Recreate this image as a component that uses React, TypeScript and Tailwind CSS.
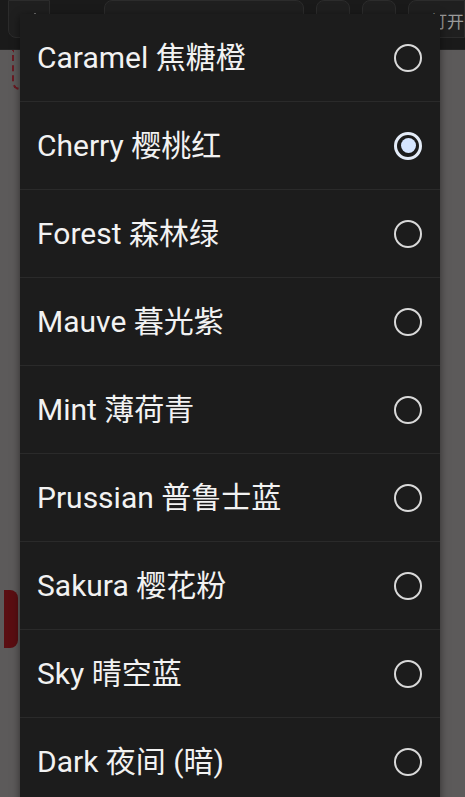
import React from "react";

const items = [
  { label: "Caramel 焦糖橙", selected: false },
  { label: "Cherry 樱桃红", selected: true },
  { label: "Forest 森林绿", selected: false },
  { label: "Mauve 暮光紫", selected: false },
  { label: "Mint 薄荷青", selected: false },
  { label: "Prussian 普鲁士蓝", selected: false },
  { label: "Sakura 樱花粉", selected: false },
  { label: "Sky 晴空蓝", selected: false },
  { label: "Dark 夜间 (暗)", selected: false },
];

function Radio({ selected }: { selected: boolean }) {
  if (selected) {
    return (
      <div className="w-[28px] h-[28px] rounded-full border-[3px] border-[#e4ecf8] flex items-center justify-center">
        <div className="w-[15px] h-[15px] rounded-full bg-[#d5e5ff]" />
      </div>
    );
  }
  return <div className="w-[28px] h-[28px] rounded-full border-[2.5px] border-[#d9d9d9]" />;
}

export default function App() {
  return (
    <div
      className="relative w-[465px] h-[797px] overflow-hidden bg-[#5c5a5a]"
      style={{ fontFamily: "Roboto, 'Noto Sans CJK SC', sans-serif" }}
    >
      {/* top bar */}
      <div className="h-[50px] bg-[#1a1a1a] flex items-start gap-3 pl-2 pt-0 border-b border-[#222]">
        <div className="w-[42px] h-[38px] rounded-b-lg bg-[#1f1f1f] border border-[#2c2c2c] flex flex-col items-center justify-center gap-[3px] pl-3">
          <span className="w-[2px] h-[2px] bg-[#888] rounded-full" />
          <span className="w-[2px] h-[2px] bg-[#888] rounded-full" />
          <span className="w-[2px] h-[2px] bg-[#888] rounded-full" />
        </div>
        <div className="ml-[42px] w-[200px] h-[38px] rounded-lg bg-[#1f1f1f] border border-[#2c2c2c]" />
        <div className="w-[34px] h-[38px] rounded-lg bg-[#1f1f1f] border border-[#2c2c2c]" />
        <div className="w-[34px] h-[38px] rounded-lg bg-[#1f1f1f] border border-[#2c2c2c]" />
        <div className="flex-1 h-[38px] rounded-l-lg bg-[#1f1f1f] border border-[#2c2c2c] flex items-center justify-end pt-2 text-[17px] text-[#9a9a9a]">
          打开
        </div>
      </div>
      {/* background content */}
      <div className="flex flex-col px-3 gap-[500px]">
        <div className="h-[40px] w-[60px] border-l-2 border-b-2 border-dashed border-[#6a1a22] rounded-bl-lg" />
        <div className="-ml-2 w-[14px] h-[58px] rounded-r-lg bg-[#5a0e12]" />
      </div>

      {/* dialog */}
      <div className="absolute left-[20px] top-[14px] w-[420px] bg-[#1c1c1c] shadow-[0_2px_8px_rgba(0,0,0,0.5)]">
        {items.map((it, i) => (
          <div
            key={it.label}
            className={`h-[88px] flex items-center justify-between pl-[17px] pr-[18px] ${
              i < items.length - 1 ? "border-b border-[#2a2a2a]" : ""
            }`}
          >
            <span className="text-[30px] text-[#f2f2f2] leading-none">{it.label}</span>
            <Radio selected={it.selected} />
          </div>
        ))}
      </div>
    </div>
  );
}
